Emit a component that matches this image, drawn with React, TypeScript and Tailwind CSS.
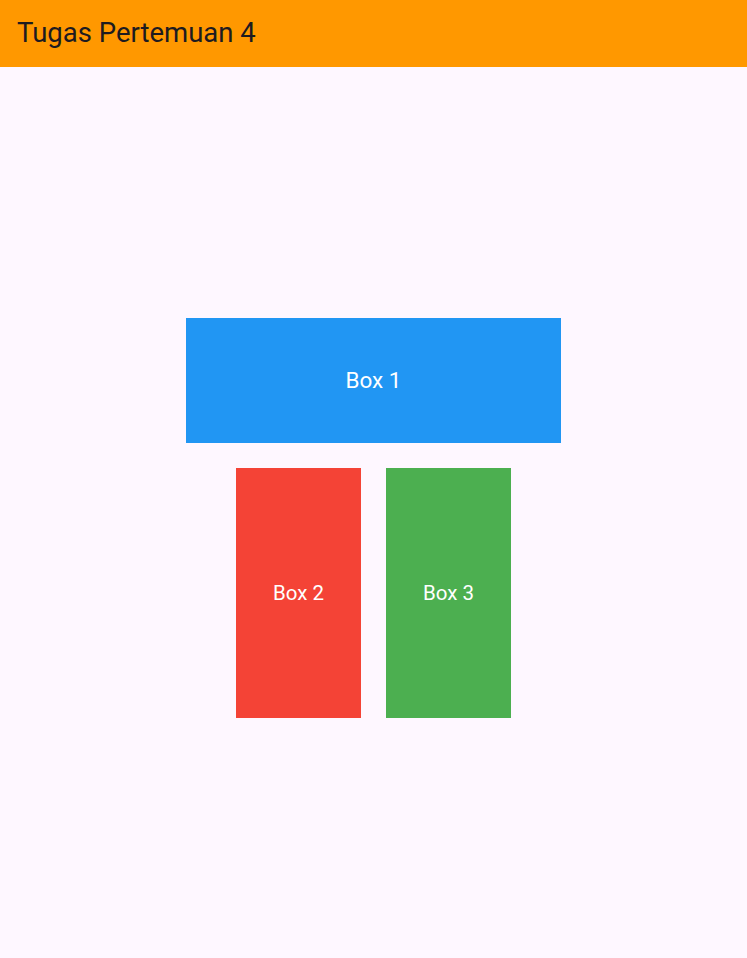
export default function App() {
  return (
    <div className="min-h-screen flex flex-col bg-[#fef7ff] font-['Roboto',sans-serif]">
      <header className="h-[67px] shrink-0 bg-[#ff9800] flex items-center px-[17px]">
        <h1 className="text-[27.5px] text-[#1d1b20] leading-none -mt-[2px]">Tugas Pertemuan 4</h1>
      </header>

      <main className="flex-1 flex flex-col items-center pt-[251px] gap-[25px]">
        {/* top row */}
        <div className="w-[375px] h-[125px] bg-[#2196f3] flex items-center justify-center">
          <span className="text-white text-[22.5px]">Box 1</span>
        </div>

        {/* bottom row */}
        <div className="flex gap-[25px]">
          <div className="w-[125px] h-[250px] bg-[#f44336] flex items-center justify-center">
            <span className="text-white text-[20.5px]">Box 2</span>
          </div>
          <div className="w-[125px] h-[250px] bg-[#4caf50] flex items-center justify-center">
            <span className="text-white text-[20.5px]">Box 3</span>
          </div>
        </div>
      </main>
    </div>
  )
}
